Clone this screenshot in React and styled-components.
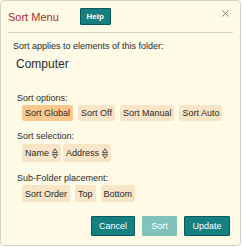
import React from "react";
import styled, { createGlobalStyle } from "styled-components";

const GlobalStyle = createGlobalStyle`
  body {
    margin: 0;
    background: #ffffff;
    font-family: "Liberation Sans", Arial, sans-serif;
  }
`;

const Panel = styled.div`
  box-sizing: border-box;
  width: 241px;
  height: 246px;
  background: #fffbe6;
  border: 1px solid #d6d3c4;
  border-radius: 4px;
  display: flex;
  flex-direction: column;
`;

const Header = styled.div`
  display: flex;
  align-items: center;
  height: 31px;
  margin: 0 7px;
  border-bottom: 1px solid #d9d6c8;
`;

const Title = styled.span`
  font-size: 11px;
  color: #a3302c;
`;

const HelpButton = styled.button`
  margin-left: 21px;
  width: 31px;
  height: 17px;
  padding: 0;
  background: #15807f;
  border: 1px solid #0b5a59;
  border-radius: 1px;
  color: #ffffff;
  font-family: "Liberation Sans", Arial, sans-serif;
  font-size: 8px;
  font-weight: 700;
`;

const Close = styled.span`
  margin-left: auto;
  margin-right: 4px;
  margin-top: -7px;
  display: flex;
`;

const Body = styled.div`
  padding: 0 12px;
  display: flex;
  flex-direction: column;
`;

const Intro = styled.div`
  margin-top: 8px;
  font-size: 9px;
  line-height: 11px;
  color: #2a2a2a;
`;

const Folder = styled.div`
  margin-top: 5px;
  padding-left: 3px;
  font-size: 12px;
  line-height: 14px;
  color: #2a2a2a;
`;

const Section = styled.div`
  margin-top: ${(p) => p.$top}px;
  padding-left: 4px;
`;

const Label = styled.div`
  font-size: 9px;
  line-height: 11px;
  color: #2a2a2a;
`;

const Row = styled.div`
  display: flex;
  gap: ${(p) => p.$gap || 5}px;
  margin-top: ${(p) => p.$top || 1}px;
  padding-left: 5px;
`;

const Chip = styled.div`
  display: flex;
  align-items: center;
  gap: 3px;
  height: ${(p) => p.$h || 16}px;
  padding: 0 3px;
  background: ${(p) => (p.$active ? "#fdc88e" : "#f8e4c6")};
  border-radius: 2px;
  font-size: 9px;
  color: #2a2a2a;
  white-space: nowrap;
`;

const Footer = styled.div`
  display: flex;
  justify-content: flex-end;
  gap: 7px;
  margin-top: auto;
  margin-bottom: 9px;
  padding-right: 10px;
`;

const ActionButton = styled.button`
  height: 20px;
  width: ${(p) => p.$w}px;
  padding: 0;
  background: ${(p) => (p.disabled ? "#80c3bd" : "#15807f")};
  border: 1px solid ${(p) => (p.disabled ? "#80c3bd" : "#0b5a59")};
  border-radius: 1px;
  color: #ffffff;
  font-family: "Liberation Sans", Arial, sans-serif;
  font-size: 9px;
`;

const SortIcon = () => (
  <svg width="6" height="11" viewBox="0 0 6 11">
    <path d="M3 0.8 L5.5 4.6 L0.5 4.6 Z" fill="none" stroke="#444" strokeWidth="0.9" />
    <path d="M0.5 6.4 L5.5 6.4 L3 10.2 Z" fill="none" stroke="#444" strokeWidth="0.9" />
  </svg>
);

const CloseIcon = () => (
  <svg width="7" height="7" viewBox="0 0 7 7">
    <path d="M0.5 0.5 L6.5 6.5 M6.5 0.5 L0.5 6.5" stroke="#808080" strokeWidth="1" />
  </svg>
);

export default function App() {
  return (
    <>
      <GlobalStyle />
      <Panel>
        <Header>
          <Title>Sort Menu</Title>
          <HelpButton>Help</HelpButton>
          <Close>
            <CloseIcon />
          </Close>
        </Header>
        <Body>
          <Intro>Sort applies to elements of this folder:</Intro>
          <Folder>Computer</Folder>

          <Section $top={22}>
            <Label>Sort options:</Label>
            <Row>
              <Chip $active>Sort Global</Chip>
              <Chip>Sort Off</Chip>
              <Chip>Sort Manual</Chip>
              <Chip>Sort Auto</Chip>
            </Row>
          </Section>

          <Section $top={10}>
            <Label>Sort selection:</Label>
            <Row $gap={2} $top={2}>
              <Chip $h={18}>
                Name <SortIcon />
              </Chip>
              <Chip $h={18}>
                Address <SortIcon />
              </Chip>
            </Row>
          </Section>

          <Section $top={11}>
            <Label>Sub-Folder placement:</Label>
            <Row>
              <Chip $h={17}>Sort Order</Chip>
              <Chip $h={17}>Top</Chip>
              <Chip $h={17}>Bottom</Chip>
            </Row>
          </Section>
        </Body>
        <Footer>
          <ActionButton $w={44}>Cancel</ActionButton>
          <ActionButton $w={35} disabled>
            Sort
          </ActionButton>
          <ActionButton $w={46}>Update</ActionButton>
        </Footer>
      </Panel>
    </>
  );
}
